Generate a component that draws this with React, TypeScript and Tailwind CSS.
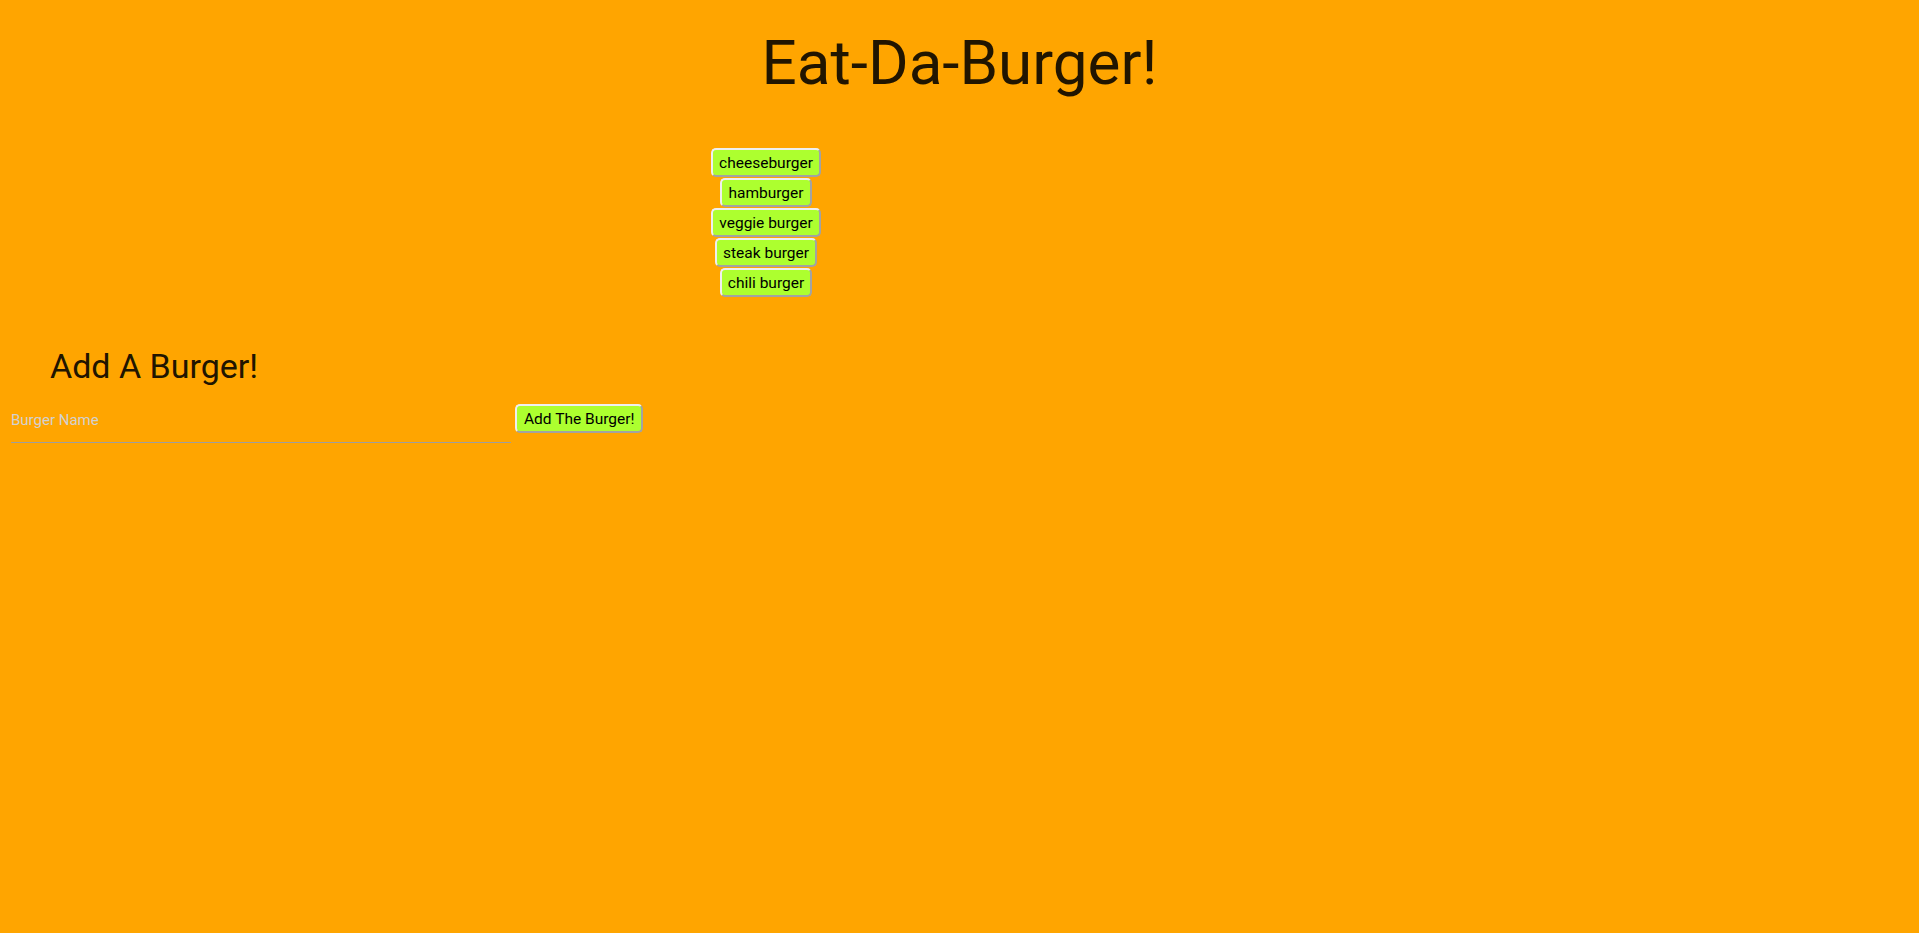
import React from "react";

const burgers = ["cheeseburger", "hamburger", "veggie burger", "steak burger", "chili burger"];

function GreenButton({ children, wide }: { children: React.ReactNode; wide?: boolean }) {
  return (
    <button
      type="button"
      className={
        wide
          ? "h-[29px] rounded-[5px] border-2 border-t-[#efefef] border-l-[#efefef] border-b-[#a3a3a3] border-r-[#a3a3a3] bg-[#adff2f] px-[7px] pt-[2px] pb-0 text-[15.5px] leading-[23px] text-black whitespace-nowrap"
          : "h-[29px] rounded-[5px] border-2 border-t-[#efefef] border-l-[#efefef] border-b-[#a3a3a3] border-r-[#a3a3a3] bg-[#adff2f] px-[6px] pt-[2px] pb-0 text-[15.5px] leading-[23px] text-black whitespace-nowrap"
      }
      style={{ fontFamily: "Roboto, 'Noto Sans', sans-serif" }}
    >
      {children}
    </button>
  );
}

export default function App() {
  return (
    <div
      className="min-h-[933px] w-full bg-[#ffa500] text-[#211500] overflow-hidden"
      style={{ fontFamily: "Roboto, 'Noto Sans', sans-serif" }}
    >
      <h1 className="mt-[28px] text-center text-[62px] leading-[70px] font-normal">Eat-Da-Burger!</h1>

      <div className="mt-[50px] flex w-[1532px] flex-col items-center gap-[1px]">
        {burgers.map((b) => (
          <GreenButton key={b}>{b}</GreenButton>
        ))}
      </div>

      <h4 className="mt-[49px] pl-[50px] text-[34px] leading-[40px] font-normal">Add A Burger!</h4>

      <div className="mt-[12px] flex items-start pl-[11px]">
        <input
          type="text"
          placeholder="Burger Name"
          className="h-[45px] w-[500px] border-b border-[#9e9e9e] bg-transparent text-[15px] outline-none placeholder:text-[#d1d1d1]"
        />
        <div className="ml-[4px] mt-[6px]">
          <GreenButton wide>Add The Burger!</GreenButton>
        </div>
      </div>
    </div>
  );
}
